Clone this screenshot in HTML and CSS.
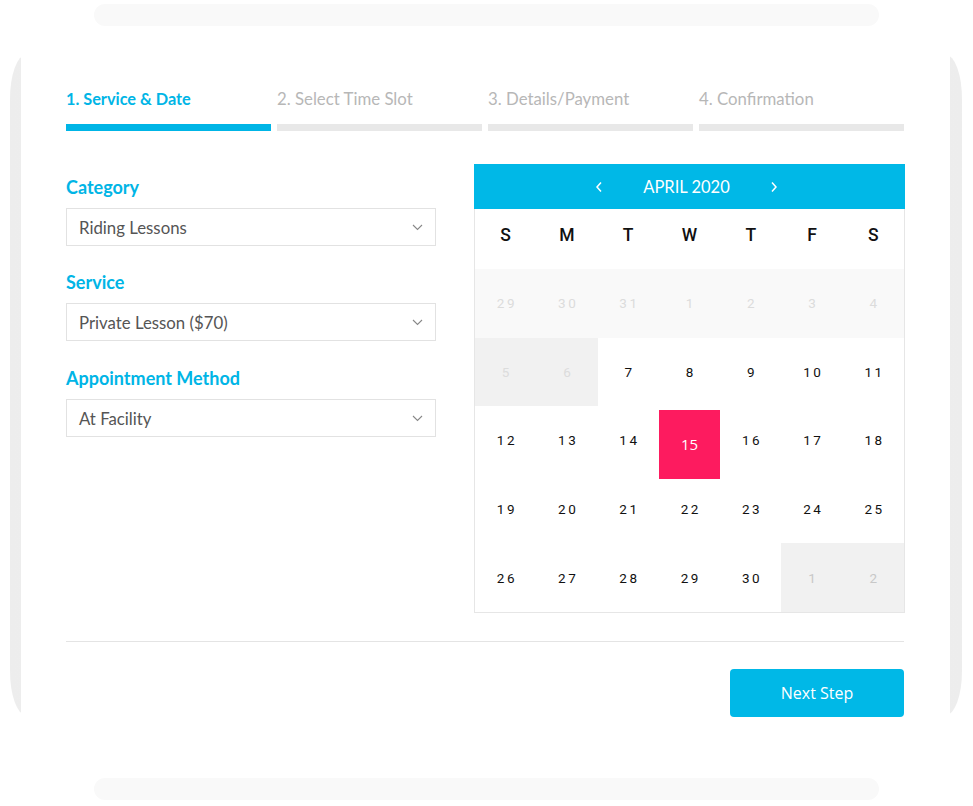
FILE: index.html
```html
<!DOCTYPE html>
<html lang="en">
<head>
    <meta charset="UTF-8">
    <meta name="viewport" content="width=device-width, initial-scale=1.0">
    <title>Book an Appointment</title>
    <link rel="stylesheet" href="styles.css">
</head>
<body>
    <div class="pill pill-top"></div>
    <div class="frame">
        <div class="card">
            <div class="steps">
                <div class="step active"><span>1. Service &amp; Date</span><div class="bar"></div></div>
                <div class="step"><span>2. Select Time Slot</span><div class="bar"></div></div>
                <div class="step"><span>3. Details/Payment</span><div class="bar"></div></div>
                <div class="step"><span>4. Confirmation</span><div class="bar"></div></div>
            </div>

            <div class="main">
                <div class="fields">
                    <div class="form-group">
                        <label>Category</label>
                        <div class="select">Riding Lessons
                            <svg width="11" height="7" viewBox="0 0 11 7"><path d="M1 1l4.5 4.5L10 1" fill="none" stroke="#888" stroke-width="1.1"/></svg>
                        </div>
                    </div>
                    <div class="form-group">
                        <label>Service</label>
                        <div class="select">Private Lesson ($70)
                            <svg width="11" height="7" viewBox="0 0 11 7"><path d="M1 1l4.5 4.5L10 1" fill="none" stroke="#888" stroke-width="1.1"/></svg>
                        </div>
                    </div>
                    <div class="form-group">
                        <label>Appointment Method</label>
                        <div class="select">At Facility
                            <svg width="11" height="7" viewBox="0 0 11 7"><path d="M1 1l4.5 4.5L10 1" fill="none" stroke="#888" stroke-width="1.1"/></svg>
                        </div>
                    </div>
                </div>

                <div class="calendar">
                    <div class="cal-head">
                        <svg width="8" height="12" viewBox="0 0 8 12"><path d="M6 1.5L2 6l4 4.5" fill="none" stroke="#fff" stroke-width="1.5"/></svg>
                        <span>APRIL 2020</span>
                        <svg width="8" height="12" viewBox="0 0 8 12"><path d="M2 1.5L6 6l-4 4.5" fill="none" stroke="#fff" stroke-width="1.5"/></svg>
                    </div>
                    <div class="weekdays">
                        <div>S</div><div>M</div><div>T</div><div>W</div><div>T</div><div>F</div><div>S</div>
                    </div>
                    <div class="days">
                        <div class="day prev">29</div><div class="day prev">30</div><div class="day prev">31</div>
                        <div class="day prev">1</div><div class="day prev">2</div><div class="day prev">3</div><div class="day prev">4</div>

                        <div class="day off">5</div><div class="day off">6</div><div class="day">7</div>
                        <div class="day">8</div><div class="day">9</div><div class="day">10</div><div class="day">11</div>

                        <div class="day">12</div><div class="day">13</div><div class="day">14</div>
                        <div class="day selected">15</div><div class="day">16</div><div class="day">17</div><div class="day">18</div>

                        <div class="day">19</div><div class="day">20</div><div class="day">21</div>
                        <div class="day">22</div><div class="day">23</div><div class="day">24</div><div class="day">25</div>

                        <div class="day">26</div><div class="day">27</div><div class="day">28</div>
                        <div class="day">29</div><div class="day">30</div><div class="day off next">1</div><div class="day off next">2</div>
                    </div>
                </div>
            </div>

            <hr class="divider">

            <div class="actions">
                <button type="button">Next Step</button>
            </div>
        </div>
    </div>
    <div class="pill pill-bottom"></div>
</body>
</html>
```

FILE: styles.css
```css
body {
    margin: 0;
    background: #fff;
    font-family: Lato, "Open Sans", sans-serif;
}
.pill {
    width: 785px;
    height: 22px;
    margin-left: 94px;
    background: #f9f9f9;
    border-radius: 11px;
}
.pill-top {
    margin-top: 4px;
}
.pill-bottom {
    margin-top: 63px;
}
.frame {
    width: 952px;
    height: 660px;
    margin: 29px 0 0 10px;
    padding: 0 12px 0 11px;
    box-sizing: border-box;
    background: linear-gradient(90deg, #ededed, #f5f5f5 50%, #ededed);
    border-radius: 16px / 44px;
}
.card {
    height: 100%;
    background: #fff;
    padding: 34px 46px 0 45px;
    box-sizing: border-box;
}

/* steps */
.steps {
    display: grid;
    grid-template-columns: repeat(4, 1fr);
    gap: 6px;
}
.step span {
    display: block;
    font-size: 16.8px;
    line-height: 20px;
    color: #b7b7b7;
}
.step .bar {
    height: 7px;
    margin-top: 15px;
    background: #e8e8e8;
}
.step.active span {
    color: #00b5e6;
    font-weight: 700;
    font-size: 16.3px;
}
.step.active .bar {
    background: #00b5e6;
}

/* main */
.main {
    display: grid;
    grid-template-columns: 370px 431px;
    justify-content: space-between;
    margin: 33px -1px 0 0;
}
.fields {
    padding-top: 13px;
}
.form-group {
    margin-bottom: 26px;
}
.form-group:nth-child(2) {
    margin-bottom: 27px;
}
.form-group label {
    display: block;
    font-size: 18px;
    font-weight: 700;
    line-height: 20px;
    color: #00b5e6;
    margin-bottom: 11px;
}
.select {
    display: flex;
    justify-content: space-between;
    align-items: center;
    height: 38px;
    padding: 0 12px 0 12px;
    border: 1px solid #e2e2e2;
    box-sizing: border-box;
    font-size: 16.8px;
    color: #555;
}

/* calendar */
.calendar {
    border: 1px solid #e6e6e6;
    border-top: none;
    font-family: Roboto, sans-serif;
}
.cal-head {
    display: flex;
    justify-content: center;
    align-items: center;
    gap: 40px;
    height: 45px;
    margin: 0 -1px;
    padding-right: 6px;
    background: #00b8e7;
    color: #fff;
    font-family: Lato, sans-serif;
    font-size: 16.5px;
}
.weekdays {
    display: grid;
    grid-template-columns: repeat(7, 1fr);
    height: 60px;
    padding-top: 16px;
    box-sizing: border-box;
    line-height: 20px;
    font-size: 17.5px;
    font-weight: 500;
    color: #111;
    text-align: center;
}
.days {
    display: grid;
    grid-template-columns: repeat(7, 1fr);
    grid-auto-rows: 68.6px;
}
.day {
    display: flex;
    justify-content: center;
    align-items: center;
    font-size: 13.5px;
    font-weight: 400;
    letter-spacing: 2.5px;
    text-indent: 2.5px;
    color: #111;
}
.day.prev {
    background: #f9f9f9;
    color: #dcdcdc;
}
.day.off {
    background: #f1f1f1;
    color: #dcdcdc;
}
.day.next {
    color: #c8c8c8;
}
.day.selected {
    margin: 4px 0 -4px;
    background: #fd1b5f;
    color: #fff;
    font-family: "Open Sans", sans-serif;
    font-size: 15px;
    letter-spacing: 0;
    text-indent: 0;
}

/* footer */
.divider {
    margin: 28px 0 0;
    border: none;
    border-top: 1.5px solid #e4e4e4;
}
.actions {
    display: flex;
    justify-content: flex-end;
    margin-top: 27px;
}
.actions button {
    width: 174px;
    height: 48px;
    border: none;
    border-radius: 4px;
    background: #00b8e7;
    color: #fff;
    font-family: "Open Sans", sans-serif;
    font-size: 16px;
    cursor: pointer;
}
```
